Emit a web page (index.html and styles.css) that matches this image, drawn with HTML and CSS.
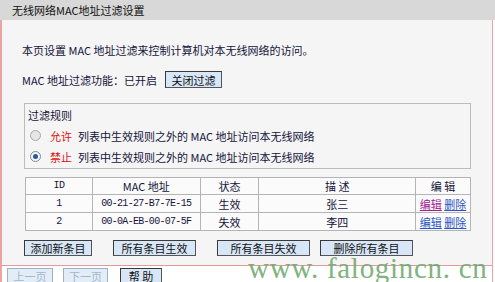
FILE: index.html
```html
<!doctype html>
<html>
<head>
	<meta charset="utf-8" />
	<title>无线网络MAC地址过滤设置</title>
	<link rel="stylesheet" href="styles.css">
</head>
<body>
	<div class="title">无线网络MAC地址过滤设置</div>
	<div class="frame">
		<div class="content">
			<p class="intro">本页设置 MAC 地址过滤来控制计算机对本无线网络的访问。</p>
			<div class="status">
				<span class="status-label">MAC 地址过滤功能：已开启</span>
				<button class="btn btn-close">关闭过滤</button>
			</div>

			<div class="rules">
				<div class="rule-row rule-title">过滤规则</div>
				<div class="rule-row"><span class="radio"></span><span class="red">允许</span>列表中生效规则之外的 MAC 地址访问本无线网络</div>
				<div class="rule-row"><span class="radio checked"></span><span class="red">禁止</span>列表中生效规则之外的 MAC 地址访问本无线网络</div>
			</div>

			<table class="list">
				<tr>
					<th class="c-id mono">ID</th>
					<th class="c-mac">MAC 地址</th>
					<th class="c-st">状态</th>
					<th class="c-desc">描 述</th>
					<th class="c-ed">编 辑</th>
				</tr>
				<tr>
					<td class="mono">1</td>
					<td class="mono">00-21-27-B7-7E-15</td>
					<td>生效</td>
					<td>张三</td>
					<td><a href="#" class="visited">编辑</a> <a href="#">删除</a></td>
				</tr>
				<tr>
					<td class="mono">2</td>
					<td class="mono">00-0A-EB-00-07-5F</td>
					<td>失效</td>
					<td>李四</td>
					<td><a href="#">编辑</a> <a href="#">删除</a></td>
				</tr>
			</table>

			<div class="actions">
				<button class="btn w67">添加新条目</button>
				<button class="btn w82">所有条目生效</button>
				<button class="btn w93">所有条目失效</button>
				<button class="btn w93 last">删除所有条目</button>
			</div>
		</div>
		<div class="footer">
			<button class="btn off w45">上一页</button>
			<button class="btn off w44">下一页</button>
			<button class="btn w41">帮 助</button>
		</div>
	</div>
	<div class="watermark">www. falogincn. cn</div>
</body>
</html>
```
FILE: styles.css
```css
body,
p,
table,
button {
	margin: 0;
	padding: 0;
}

body {
	width: 495px;
	height: 282px;
	overflow: hidden;
	position: relative;
	background: #fff;
	font-family: "Noto Sans CJK SC", "Liberation Sans", sans-serif;
	font-size: 11px;
	color: #14143a;
}

.title {
	height: 20px;
	line-height: 21px;
	padding-left: 12px;
	background: #d8d8d8;
	color: #111;
}

.frame {
	width: 490px;
	border-left: 2px solid #eba3a3;
	border-right: 1px solid #eba3a3;
}

.content {
	background: #f5f5f5;
	border-bottom: 1px solid #e59a9a;
	padding-bottom: 9px;
}

.intro {
	padding: 22px 0 0 20px;
	line-height: 16px;
}

.status {
	display: flex;
	align-items: center;
	height: 17px;
	margin-top: 13px;
	padding-left: 20px;
}

.status-label {
	width: 143px;
}

.btn {
	display: flex;
	align-items: center;
	justify-content: center;
	height: 16px;
	padding: 0;
	line-height: 12px;
	font-family: "Noto Sans CJK SC", "Liberation Sans", sans-serif;
	font-size: 11px;
	color: #111;
	background: #d8e7f7;
	border: 1px solid #3a3a3a;
	border-right-color: #555;
	border-bottom-color: #555;
	overflow: hidden;
}

.btn-close {
	width: 57px;
	height: 17px;
}

.rules {
	width: 445px;
	margin: 15px 0 0 22px;
	padding-bottom: 1px;
	border: 1px solid #bcbcbc;
}

.rule-row {
	display: flex;
	align-items: center;
	height: 21px;
	padding-left: 5px;
}

.rule-title {
	padding-left: 3px;
}

.radio {
	width: 9px;
	height: 9px;
	border: 1px solid #a8a8a8;
	border-radius: 50%;
	background: #e6e6e6;
	margin-right: 9px;
	position: relative;
}

.radio.checked {
	border-color: #7d8a99;
	background: #f4f6f8;
}

.radio.checked::after {
	content: "";
	position: absolute;
	left: 2px;
	top: 2px;
	width: 5px;
	height: 5px;
	border-radius: 50%;
	background: #2b5a9a;
}

.red {
	color: #e01010;
	margin-right: 6px;
}

.list {
	width: 446px;
	margin: 8px 0 0 23px;
	border-collapse: collapse;
	background: #fbfbfb;
}

.list th,
.list td {
	border: 1px solid #b4b4b4;
	height: 17px;
	padding: 0;
	text-align: center;
	font-weight: normal;
	line-height: 16px;
}

.list th {
	height: 16px;
}

.mono {
	font-family: "Liberation Mono", monospace;
	font-size: 10px;
	letter-spacing: -0.7px;
}

.c-id { width: 66px; }
.c-mac { width: 107px; }
.c-st { width: 58px; }
.c-desc { width: 156px; }
.c-ed { width: 54px; }

.list a {
	color: #2a55c4;
	text-decoration: underline;
}

.list a.visited {
	color: #a0208e;
}

.actions {
	display: flex;
	margin: 9px 0 0 22px;
	gap: 21px;
}

.actions .last {
	margin-left: -11px;
}

.w67 { width: 68px; }
.w82 { width: 83px; }
.w93 { width: 93px; }
.w45 { width: 46px; }
.w44 { width: 45px; }
.w41 { width: 42px; }

.footer {
	display: flex;
	gap: 10px;
	height: 16px;
	padding: 2px 0 0 5px;
}

.footer .btn {
	height: 15px;
}

.footer .w41 {
	margin-left: 2px;
}

.btn.off {
	color: #a3b8cc;
	border-color: #9fb0c2;
	background: #e2edf8;
}

.watermark {
	position: absolute;
	left: 248px;
	top: 255px;
	line-height: 27px;
	font-family: "Liberation Serif", serif;
	font-size: 29px;
	letter-spacing: 0.7px;
	color: #6aa66a;
	opacity: 0.85;
	white-space: nowrap;
}
```
